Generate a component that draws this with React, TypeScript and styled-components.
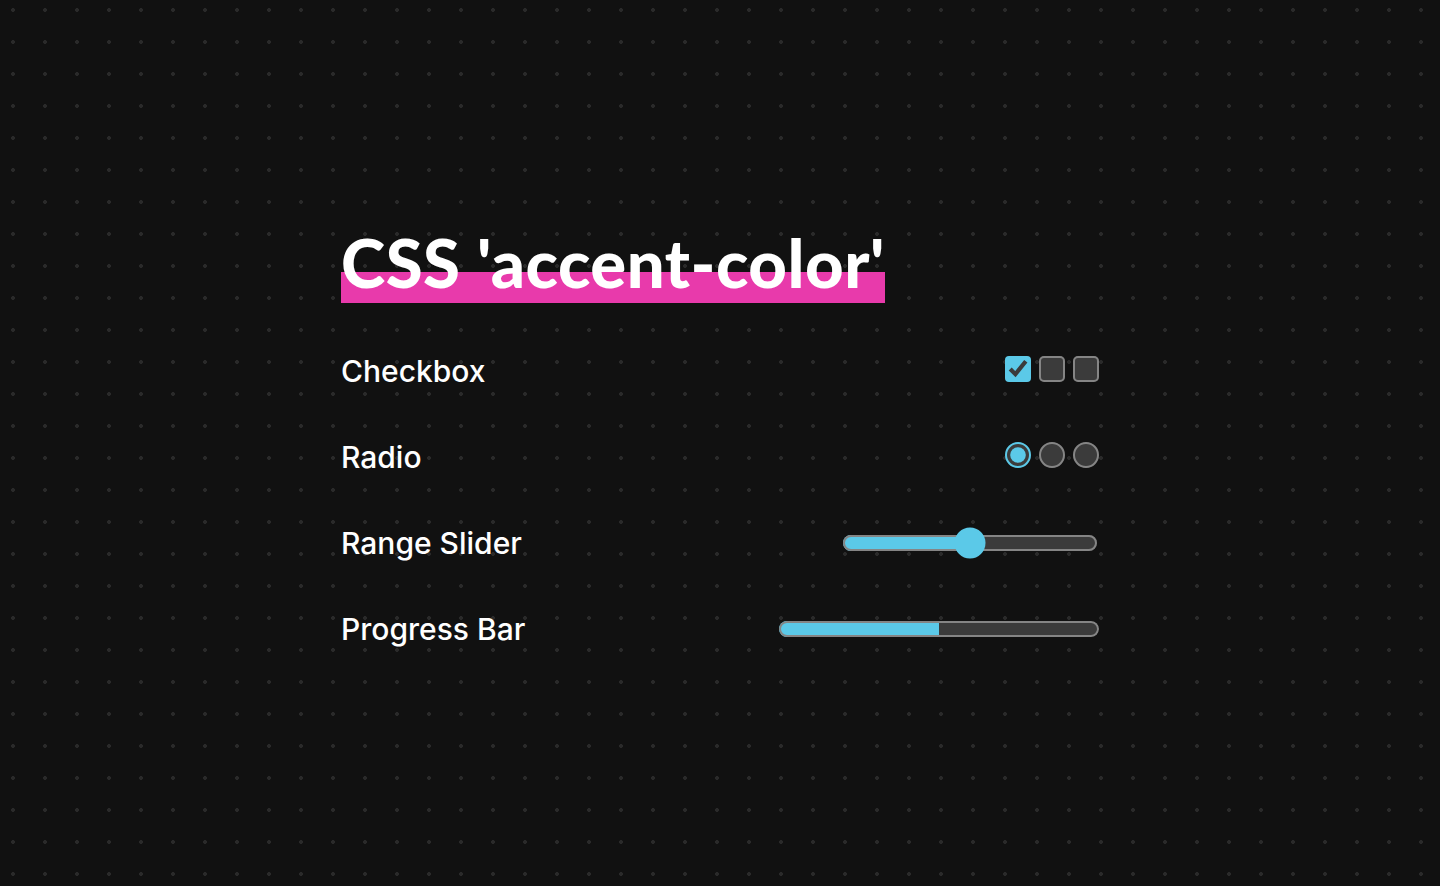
import styled, { createGlobalStyle } from 'styled-components';

const GlobalStyle = createGlobalStyle`
  :root {
    color-scheme: dark;
  }

  html, body {
    margin: 0;
    min-height: 100%;
  }

  body {
    min-height: 886px;
    background-color: #111111;
    background-image: radial-gradient(circle, #2a2a2a 1.6px, transparent 2.2px);
    background-size: 32px 32px;
    background-position: -3px -6px;
    color: #ffffff;
    font-family: Inter, "Noto Sans", sans-serif;
  }
`;

const Main = styled.main`
  width: 758px;
  margin: 0 auto;
  padding-top: 233px;
`;

const Title = styled.h1`
  margin: 0 0 25px;
`;

const Highlight = styled.span`
  display: inline-block;
  font-family: Lato, Inter, sans-serif;
  font-size: 67px;
  font-weight: 900;
  line-height: 58px;
  padding-bottom: 12px;
  letter-spacing: 0.5px;
  background: linear-gradient(to bottom, transparent calc(100% - 31px), #e83aab calc(100% - 31px));
`;

const Row = styled.div`
  display: flex;
  align-items: center;
  justify-content: space-between;
  height: 86px;
`;

const Label = styled.label`
  font-size: 30px;
  font-weight: 500;
`;

const Controls = styled.div<{ $lift?: boolean }>`
  display: flex;
  align-items: center;
  gap: 8px;
  margin-bottom: ${({ $lift }) => ($lift ? '4px' : '0')};
`;

// native controls, blown up 2x and tinted through accent-color
const Input = styled.input`
  zoom: 2;
  margin: 0;
  accent-color: #5bc9e8;
`;

const Slider = styled(Input)`
  width: 128px;
  margin-right: 0.5px;
`;

const Progress = styled.progress`
  zoom: 2;
  accent-color: #5bc9e8;
`;

const App = () => (
  <>
    <GlobalStyle />
    <Main>
      <Title><Highlight>CSS 'accent-color'</Highlight></Title>

      <Row>
        <Label>Checkbox</Label>
        <Controls $lift>
          <Input type='checkbox' defaultChecked />
          <Input type='checkbox' />
          <Input type='checkbox' />
        </Controls>
      </Row>

      <Row>
        <Label>Radio</Label>
        <Controls $lift>
          <Input type='radio' name='radio' defaultChecked />
          <Input type='radio' name='radio' />
          <Input type='radio' name='radio' />
        </Controls>
      </Row>

      <Row>
        <Label>Range Slider</Label>
        <Controls>
          <Slider type='range' min={0} max={100} defaultValue={50} />
        </Controls>
      </Row>

      <Row>
        <Label>Progress Bar</Label>
        <Controls>
          <Progress max={100} value={50} />
        </Controls>
      </Row>
    </Main>
  </>
);

export default App;
